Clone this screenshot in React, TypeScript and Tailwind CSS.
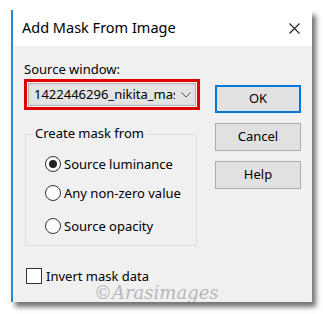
import React from "react";

const font = { fontFamily: '"Noto Sans", "Open Sans", sans-serif' };

function Radio({ checked, label }: { checked?: boolean; label: string }) {
  return (
    <div className="flex items-center gap-[3px] h-[18px]">
      <div className="w-[16px] h-[16px] rounded-full border border-[#333] bg-white flex items-center justify-center">
        {checked && <div className="w-[8px] h-[8px] rounded-full bg-[#222]" />}
      </div>
      <span className="text-[13px] text-black leading-none">{label}</span>
    </div>
  );
}

function Btn({ label, primary }: { label: string; primary?: boolean }) {
  return (
    <div
      className={
        "w-[86px] h-[28px] flex items-center justify-center bg-[#e1e1e1] text-[13px] text-black " +
        (primary ? "border-2 border-[#0078d7]" : "border border-[#adadad]")
      }
    >
      {label}
    </div>
  );
}

export default function App() {
  return (
    <div className="w-[323px] h-[314px] bg-white pl-[11px] pt-[10px]" style={font}>
      <div className="w-[301px] h-[292px] flex flex-col border-l-2 border-[#2b88d8] shadow-[4px_5px_5px_rgba(0,0,0,0.55)]">
        <div className="h-[36px] shrink-0 bg-white flex items-center justify-between pl-[9px] pr-[12px]">
          <span className="text-[14.5px] text-black">Add Mask From Image</span>
          <svg width="11" height="11" viewBox="0 0 11 11">
            <path d="M0.5 0.5 L10.5 10.5 M10.5 0.5 L0.5 10.5" stroke="#222" strokeWidth="1.1" />
          </svg>
        </div>
        <div className="flex-1 min-h-0 bg-[#f0f0f0] flex pl-[11px] overflow-hidden">
          <div className="w-[176px] flex flex-col">
            <div className="mt-[15px] text-[13px] text-black leading-[17px]">Source window:</div>
            <div className="mt-[1px] shrink-0 w-[176px] h-[31px] border-[3px] border-[#e00000] p-[1px] flex">
              <div className="flex-1 bg-[#e3e3e3] border border-[#b5b5b5] shadow-[inset_0_0_2px_rgba(0,0,0,0.15)] flex items-center pl-[5px] pr-[4px] overflow-hidden">
                <span className="text-[13px] text-black whitespace-nowrap overflow-hidden w-[142px]">1422446296_nikita_masque</span>
                <svg width="10" height="6" viewBox="0 0 10 6" className="ml-[6px] shrink-0">
                  <path d="M0.5 0.5 L5 5 L9.5 0.5" stroke="#555" strokeWidth="1" fill="none" />
                </svg>
              </div>
            </div>
            <div className="relative shrink-0 mt-[24px] ml-[1px] w-[172px] h-[112px] border border-[#dcdcdc]">
              <span className="absolute left-[8px] top-[-10px] bg-[#f0f0f0] px-[1px] text-[13px] text-black leading-[17px]">
                Create mask from
              </span>
              <div className="flex flex-col pl-[19px] pt-[20px] gap-[11px]">
                <Radio checked label="Source luminance" />
                <Radio label="Any non-zero value" />
                <div className="mt-[4px]">
                  <Radio label="Source opacity" />
                </div>
              </div>
            </div>
            <div className="mt-[22px] shrink-0 ml-[2px] flex items-center gap-[4px]">
              <div className="w-[16px] h-[16px] border border-[#333] bg-white" />
              <span className="text-[13px] text-black leading-[16px]">Invert mask data</span>
            </div>
            <div
              className="ml-[70px] shrink-0 mt-0 text-[18px] leading-[17px] text-[#b8b8b8] italic"
              style={{ fontFamily: '"DejaVu Serif", serif' }}
            >
              ©Arasimages
            </div>
          </div>
          <div className="ml-[15px] mt-[39px] flex flex-col gap-[10px]">
            <Btn label="OK" primary />
            <Btn label="Cancel" />
            <Btn label="Help" />
          </div>
        </div>
      </div>
    </div>
  );
}
